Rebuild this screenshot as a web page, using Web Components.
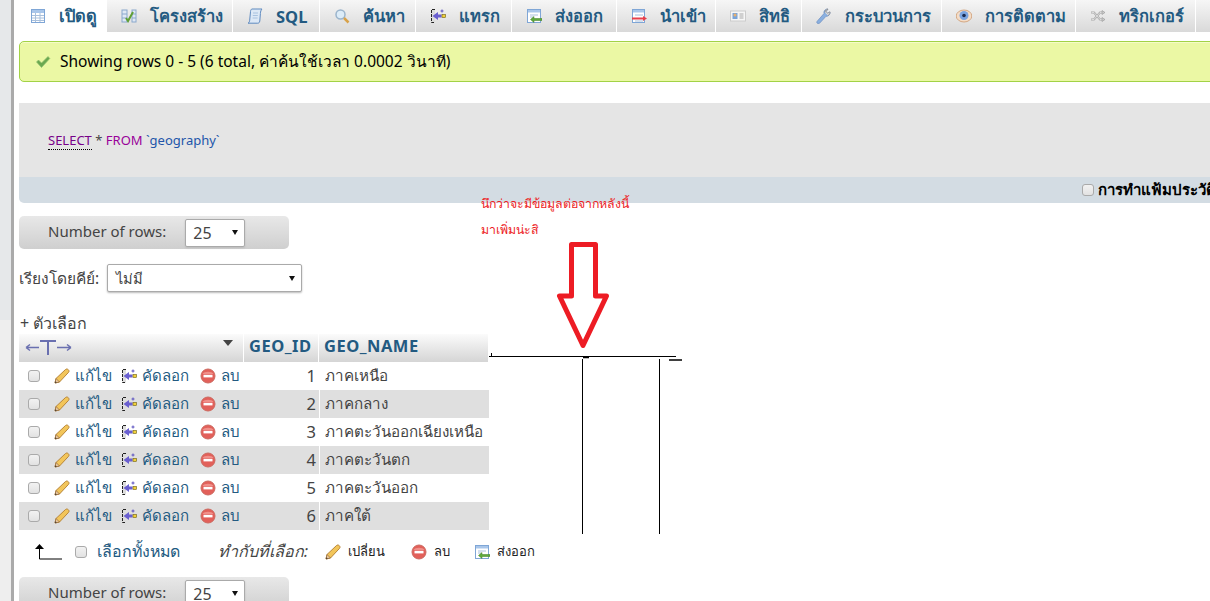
<!DOCTYPE html>
<html lang="th">
<head>
<meta charset="utf-8">
<title>geography</title>
<style>
  html, body { margin: 0; padding: 0; height: 601px; overflow: hidden; background: #fff; }
  body { font-family: "Noto Sans", "Open Sans", "DejaVu Sans", sans-serif; color: #444; }
</style>
</head>
<body>
<pma-page>
  <pma-tabs>
    <pma-tab icon="browse" label="เปิดดู" width="87" active></pma-tab>
    <pma-tab icon="structure" label="โครงสร้าง" width="125"></pma-tab>
    <pma-tab icon="sql" label="SQL" width="86"></pma-tab>
    <pma-tab icon="search" label="ค้นหา" width="95"></pma-tab>
    <pma-tab icon="insert" label="แทรก" width="95"></pma-tab>
    <pma-tab icon="export" label="ส่งออก" width="104"></pma-tab>
    <pma-tab icon="import" label="นำเข้า" width="98"></pma-tab>
    <pma-tab icon="card" label="สิทธิ" width="85"></pma-tab>
    <pma-tab icon="wrench" label="กระบวนการ" width="139"></pma-tab>
    <pma-tab icon="eye" label="การติดตาม" width="133"></pma-tab>
    <pma-tab icon="shuffle" label="ทริกเกอร์" width="119"></pma-tab>
    <pma-tab width="30"></pma-tab>
  </pma-tabs>
  <pma-message>Showing rows 0 - 5 (6 total, ค่าค้นใช้เวลา 0.0002 วินาที)</pma-message>
  <pma-sql-box></pma-sql-box>
  <pma-rows-nav></pma-rows-nav>
  <pma-key-select></pma-key-select>
  <pma-options></pma-options>
  <pma-results>
    <pma-row num="1" name="ภาคเหนือ"></pma-row>
    <pma-row num="2" name="ภาคกลาง" shade></pma-row>
    <pma-row num="3" name="ภาคตะวันออกเฉียงเหนือ"></pma-row>
    <pma-row num="4" name="ภาคตะวันตก" shade></pma-row>
    <pma-row num="5" name="ภาคตะวันออก"></pma-row>
    <pma-row num="6" name="ภาคใต้" shade></pma-row>
  </pma-results>
  <pma-bulk></pma-bulk>
  <pma-rows-nav></pma-rows-nav>
  <pma-annotation slot="over"></pma-annotation>
</pma-page>

<script>
const ICONS = {
  browse: `<rect x="1.5" y="1.5" width="13" height="13" fill="#fff" stroke="#7fa6d6"/><path d="M2 2h12v3H2z" fill="#a9c6ea"/><path d="M2 7.5h12M2 10h12M2 12.5h12M5.5 5v9M10 5v9" stroke="#a9c0dc"/>`,
  structure: `<rect x="1" y="2" width="5" height="12" fill="#dfe8f4" stroke="#8aa8cc"/><rect x="11" y="2" width="4" height="12" fill="#dfe8f4" stroke="#8aa8cc"/><path d="M1 6h5M1 10h5M11 6h4M11 10h4" stroke="#8aa8cc"/><path d="M5 10l2 3 5-9" fill="none" stroke="#5f9f35" stroke-width="2"/>`,
  sql: `<path d="M5 1h10c-1 1-1.500 2.500-1.600 4.500l-.6 7.500c-.2 1.500-1 2.200-2 2.200H1c1-.5 1.600-1.500 1.700-3L3.500 3.500C3.700 2 4 1.300 5 1z" fill="#dce8f6" stroke="#5f8abf"/><path d="M6 5h5M5.800 7.500h5M5.600 10h5" stroke="#a8c2e0"/>`,
  search: `<circle cx="6.500" cy="6.500" r="4.500" fill="#dcecf8" stroke="#9ab4cc" stroke-width="1.500"/><path d="M10 10l4.500 4.500" stroke="#d8a24a" stroke-width="2.500"/>`,
  insert: `<path d="M5 1.500H1.500v13H5" fill="#ddd" stroke="#222" stroke-dasharray="3 1"/><path d="M11.500 6.500H8V4L2.500 8 8 12V9.500h3.500z" fill="#6a5fd0"/><rect x="12" y="6.500" width="3.500" height="3" fill="#f2d23c" stroke="#6a5a10" stroke-width=".6"/><path d="M12 1.500v3M10.500 3h3" stroke="#5a50c0"/>`,
  export: `<rect x="1.500" y="1.500" width="13" height="13" fill="#fff" stroke="#7fa6d6"/><path d="M2 2h12v2.500H2z" fill="#a9c6ea"/><path d="M4 7h8M4 9h3" stroke="#a9c0dc"/><path d="M16 10.500H8V8.500L4.500 11.500 8 14.500v-2h8z" fill="#5faa3c" stroke="#3f7f25" stroke-width=".5"/>`,
  import: `<rect x="1.500" y="1.500" width="12" height="13" fill="#fff" stroke="#7fa6d6"/><path d="M2 2h11v2.500H2z" fill="#a9c6ea"/><path d="M4 7h8M4 13h8" stroke="#a9c0dc"/><path d="M1 9.500h11V8l4 2.500-4 2.500v-1.500H1z" fill="#e8404a"/>`,
  card: `<rect x=".5" y="3" width="15" height="10" fill="#f6f6f6" stroke="#ccc"/><rect x="2.500" y="5" width="5" height="6" fill="#7aa4d8"/><circle cx="5" cy="7" r="1.500" fill="#e8b070"/><path d="M9.500 6h4M9.500 8h4M9.500 10h4" stroke="#aaa"/>`,
  wrench: `<path d="M2 15.500c-1 0-1.500-1-1-2l7-8c-.5-2 .5-4 3-4.500l1 .2-2 2.300 1.500 2 2.500-1.500c.3 2.500-1.500 4.500-4 4.300l-6.500 7z" fill="#8ab0e0" stroke="#6a8cc0" stroke-width=".7"/><path d="M9 4.500c-.2-2 1-3.500 3-3.500l-2 2.300 1.500 2 2.500-1.500c.2 1.500-.6 3-2 3.800" fill="#ddd" stroke="#888" stroke-width=".7"/>`,
  eye: `<ellipse cx="8" cy="8" rx="7.800" ry="6" fill="#f4ddc8" stroke="#d4a884"/><circle cx="8" cy="7.500" r="4.500" fill="#7aa4e0"/><circle cx="8" cy="7.500" r="1.800" fill="#1a2a50"/>`,
  shuffle: `<path d="M1 4.500h3l6 7h2M1 11.500h3l6-7h2" fill="none" stroke="#aaa" stroke-width="2"/><path d="M1.500 4.500h2.500l6 7h2M1.500 11.500h2.500l6-7h2" fill="none" stroke="#eee" stroke-width=".7"/><path d="M12 2.500l3 2-3 2zM12 9.500l3 2-3 2z" fill="#ccc" stroke="#888" stroke-width=".5"/>`,
  pencil: `<path d="M1 15l1-4.500L11.500 1.500c1-.8 2-.6 2.800.2s1 1.800.2 2.700L5.500 14z" fill="#f2c55a" stroke="#b8863a"/><path d="M1 15l1-4.500 3.500 3.500z" fill="#e8c8a0" stroke="#8a5a2a" stroke-width=".6"/><path d="M1 15l.4-1.800 1.400 1.400z" fill="#333"/>`,
  del: `<circle cx="8" cy="8" r="7" fill="#e2605a" stroke="#cc6a60"/><path d="M2.500 6c1.500-3 9.500-3 11 0" fill="#f0908a"/><rect x="3.500" y="6.800" width="9" height="2.600" fill="#fff"/>`,
  check: `<path d="M1.500 8l2-2 3 3L13 2.500l1.800 2L6.500 13.500z" fill="#6aa84f" stroke="#8fc070" stroke-width=".7"/>`
};

class PmaIcon extends HTMLElement {
  constructor() {
    super()
    this.attachShadow({ mode: "open" })
  }
  connectedCallback() {
    const size = this.getAttribute("size") || 16
    this.shadowRoot.innerHTML = `
      <style>
        :host { display: inline-flex; flex: none; width: ${size}px; height: ${size}px; }
        svg { width: 100%; height: 100%; display: block; }
      </style>
      <svg viewBox="0 0 16 16">${ICONS[this.getAttribute("name")] || ""}</svg>`
  }
}
customElements.define("pma-icon", PmaIcon)

class PmaCheck extends HTMLElement {
  constructor() {
    super()
    this.attachShadow({ mode: "open" }).innerHTML = `
      <style>
        :host {
          display: inline-block; flex: none; box-sizing: border-box;
          width: 12px; height: 12px; border: 1px solid #aaa; border-radius: 3px;
          background: linear-gradient(#f2f2f2, #e2e2e2);
        }
      </style>`
  }
}
customElements.define("pma-check", PmaCheck)

class PmaSelect extends HTMLElement {
  constructor() {
    super()
    this.attachShadow({ mode: "open" }).innerHTML = `
      <style>
        :host {
          display: flex; align-items: center; justify-content: space-between; box-sizing: border-box;
          height: 28px; padding: 0 6px 0 7px; background: #fff; color: #444;
          border: 1px solid #aaa; border-radius: 2px; box-shadow: 0 1px 2px #bbb; font-size: 16px;
        }
        i { width: 0; height: 0; border: 3px solid transparent; border-top: 5px solid #111; border-bottom: 0; }
      </style>
      <slot></slot><i></i>`
  }
}
customElements.define("pma-select", PmaSelect)

class PmaPage extends HTMLElement {
  constructor() {
    super()
    this.attachShadow({ mode: "open" }).innerHTML = `
      <style>
        :host { display: flex; position: relative; width: 1210px; height: 601px; overflow: hidden; }
        .side { flex: none; width: 11px; background: linear-gradient(#e6e8ea 320px, #eeeeee 320px); border-right: 3px solid #aaa; }
        main { flex: 1; min-width: 0; padding-left: 5px; overflow: hidden; }
      </style>
      <div class="side"></div>
      <main><slot></slot></main>
      <slot name="over"></slot>`
  }
}
customElements.define("pma-page", PmaPage)

class PmaTabs extends HTMLElement {
  constructor() {
    super()
    this.attachShadow({ mode: "open" }).innerHTML = `
      <style>
        :host { display: flex; height: 32px; gap: 1px; width: 1230px; }
      </style>
      <slot></slot>`
  }
}
customElements.define("pma-tabs", PmaTabs)

class PmaTab extends HTMLElement {
  constructor() {
    super()
    this.attachShadow({ mode: "open" })
  }
  connectedCallback() {
    const icon = this.getAttribute("icon")
    const label = this.getAttribute("label") || ""
    this.shadowRoot.innerHTML = `
      <style>
        :host {
          display: flex; flex: none; align-items: center; box-sizing: border-box;
          width: ${this.getAttribute("width")}px; height: 32px; padding-left: 14px;
          background: linear-gradient(#f6f6f6, #d9d9d9);
          color: #235a81; font-weight: bold; font-size: 16.5px; white-space: nowrap;
        }
        :host([active]) { background: #fff; padding-left: 11px; }
        span { margin-left: 13px; }
      </style>
      ${icon ? `<pma-icon name="${icon}"></pma-icon><span>${label}</span>` : ""}`
  }
}
customElements.define("pma-tab", PmaTab)

class PmaMessage extends HTMLElement {
  constructor() {
    super()
    this.attachShadow({ mode: "open" }).innerHTML = `
      <style>
        :host {
          display: flex; align-items: center; gap: 9px; box-sizing: border-box;
          height: 41px; margin-top: 9px; width: 1240px; padding-left: 15px;
          background: #ebf8a4; border: 1px solid #a2d246; border-radius: 5px;
          color: #000; font-size: 15.5px; white-space: nowrap;
          box-shadow: inset 0 1px 0 #f5fcc8;
        }
      </style>
      <pma-icon name="check"></pma-icon><slot></slot>`
  }
}
customElements.define("pma-message", PmaMessage)

class PmaSqlBox extends HTMLElement {
  constructor() {
    super()
    this.attachShadow({ mode: "open" }).innerHTML = `
      <style>
        :host { display: block; width: calc(100% + 6px); margin-top: 21px; font-size: 13px; }
        .code { display: flex; align-items: center; height: 74px; padding-left: 29px; background: #e5e5e5; color: #444; white-space: pre; }
        .kw { color: #909; }
        .fn { color: #708; border-bottom: 1px dotted #000; }
        .str { color: #2255aa; }
        .tools {
          display: flex; justify-content: flex-end; align-items: center; gap: 4px;
          height: 26px; background: #d3dce3; border-bottom-left-radius: 5px;
          color: #000; font-weight: bold; font-size: 15px; white-space: nowrap;
        }
      </style>
      <div class="code"><div><span class="fn">SELECT</span> * <span class="kw">FROM</span> <span class="str">\`geography\`</span></div></div>
      <div class="tools"><pma-check></pma-check><span>การทำแฟ้มประวัติ</span></div>`
  }
}
customElements.define("pma-sql-box", PmaSqlBox)

class PmaRowsNav extends HTMLElement {
  constructor() {
    super()
    this.attachShadow({ mode: "open" }).innerHTML = `
      <style>
        :host {
          display: flex; align-items: center; box-sizing: border-box; height: 33px; width: 270px;
          margin-top: 13px; padding-left: 29px; border-radius: 5px;
          background: linear-gradient(#e8e8e8, #cfcfcf); color: #444; font-size: 15px;
        }
        span { margin-top: -4px; }
        pma-select { width: 60px; margin-left: 19px; }
      </style>
      <span>Number of rows:</span><pma-select>25</pma-select>`
  }
}
customElements.define("pma-rows-nav", PmaRowsNav)

class PmaKeySelect extends HTMLElement {
  constructor() {
    super()
    this.attachShadow({ mode: "open" }).innerHTML = `
      <style>
        :host { display: flex; align-items: center; gap: 8px; height: 28px; margin-top: 15px; color: #444; font-size: 15.5px; }
        pma-select { width: 195px; padding-left: 8px; font-size: 14.5px; }
      </style>
      <span>เรียงโดยคีย์:</span><pma-select>ไม่มี</pma-select>`
  }
}
customElements.define("pma-key-select", PmaKeySelect)

class PmaOptions extends HTMLElement {
  constructor() {
    super()
    this.attachShadow({ mode: "open" }).innerHTML = `
      <style>
        :host { display: flex; align-items: center; height: 20px; margin: 21px 0 1px 1px; color: #444; font-size: 16px; }
      </style>
      + ตัวเลือก`
  }
}
customElements.define("pma-options", PmaOptions)

class PmaResults extends HTMLElement {
  constructor() {
    super()
    this.attachShadow({ mode: "open" }).innerHTML = `
      <style>
        :host { display: block; width: 470px; }
        .head { display: grid; grid-template-columns: 225px 75px 170px; height: 27px; margin-bottom: 1px; }
        .head div {
          display: flex; align-items: center; box-sizing: border-box; padding: 0 0 5px 5px;
          background: linear-gradient(#fbfbfb, #d5d5d5); color: #235a81; font-weight: bold; font-size: 16.5px; letter-spacing: .5px;
          border-right: 1px solid #fff;
        }
        .first { position: relative; }
        .first svg { display: block; position: absolute; left: 5px; top: 5px; }
        .sort { position: absolute; right: 10px; top: 6px; width: 0; height: 0; border: 5.5px solid transparent; border-top: 6px solid #444; border-bottom: 0; }
      </style>
      <div class="head">
        <div class="first">
          <svg width="50" height="18" viewBox="0 0 50 18">
            <path d="M2 8.500h13M2 8.500l4-3M2 8.500l4 3M33 8.500h14M47 8.500l-4-3M47 8.500l-4 3" fill="none" stroke="#6a70b0" stroke-width="1.500"/>
            <path d="M16 2h16M24 2v14" fill="none" stroke="#6a70b0" stroke-width="2"/>
          </svg>
          <span class="sort"></span>
        </div>
        <div>GEO_ID</div>
        <div>GEO_NAME</div>
      </div>
      <slot></slot>`
  }
}
customElements.define("pma-results", PmaResults)

class PmaRow extends HTMLElement {
  constructor() {
    super()
    this.attachShadow({ mode: "open" })
  }
  connectedCallback() {
    this.shadowRoot.innerHTML = `
      <style>
        :host { display: grid; grid-template-columns: 225px 75px 170px; height: 28px; align-items: center; color: #444; font-size: 15px; white-space: nowrap; }
        :host([shade]) { background: #dfdfdf; }
        .acts { display: flex; align-items: center; height: 100%; padding-left: 9px; }
        .acts span { color: #235a81; }
        pma-icon { margin-right: 5px; }
        .num { text-align: right; padding: 0 3px 2px 0; font-size: 16.5px; }
        .name { padding-left: 5px; border-left: 1px solid #fff; height: 100%; display: flex; align-items: center; font-size: 15.2px; }
        .w1 { width: 46px; } .w2 { width: 58px; }
      </style>
      <div class="acts">
        <pma-check style="margin-right:14px"></pma-check>
        <pma-icon name="pencil"></pma-icon><span class="w1">แก้ไข</span>
        <pma-icon name="insert"></pma-icon><span class="w2">คัดลอก</span>
        <pma-icon name="del"></pma-icon><span>ลบ</span>
      </div>
      <div class="num">${this.getAttribute("num")}</div>
      <div class="name">${this.getAttribute("name")}</div>`
  }
}
customElements.define("pma-row", PmaRow)

class PmaBulk extends HTMLElement {
  constructor() {
    super()
    this.attachShadow({ mode: "open" }).innerHTML = `
      <style>
        :host { display: flex; align-items: center; box-sizing: border-box; height: 34px; padding: 9px 0 0 15px; color: #444; font-size: 16px; white-space: nowrap; }
        svg { flex: none; }
        .all { color: #235a81; margin: 0 38px 0 10px; font-size: 15.9px; }
        em { margin-right: 17px; }
        small { font-size: 13px; color: #222; }
        pma-icon { margin-right: 7px; }
        .gap { margin-right: 26px; }
        .gap2 { margin-right: 24px; }
      </style>
      <svg width="28" height="16" viewBox="0 0 28 16"><path d="M5.500 3v12H28" fill="none" stroke="#000"/><path d="M1 5l4.500-5L10 5z" fill="#000"/></svg>
      <pma-check style="margin:0 0 0 13px"></pma-check>
      <span class="all">เลือกทั้งหมด</span>
      <em>ทำกับที่เลือก:</em>
      <pma-icon name="pencil"></pma-icon><small class="gap">เปลี่ยน</small>
      <pma-icon name="del"></pma-icon><small class="gap2">ลบ</small>
      <pma-icon name="export"></pma-icon><small>ส่งออก</small>`
  }
}
customElements.define("pma-bulk", PmaBulk)

// hand drawn marks on top of the screenshot
class PmaAnnotation extends HTMLElement {
  constructor() {
    super()
    this.attachShadow({ mode: "open" }).innerHTML = `
      <style>
        :host { position: absolute; left: 0; top: 0; width: 1210px; height: 601px; pointer-events: none; }
        svg { position: absolute; left: 0; top: 0; }
        p { position: absolute; left: 481px; margin: 0; color: #ed1c24; font-size: 12.3px; line-height: 16px; white-space: nowrap; }
      </style>
      <p style="top:196px">นึกว่าจะมีข้อมูลต่อจากหลังนี้</p>
      <p style="top:222px">มาเพิ่มน่ะสิ</p>
      <svg width="1210" height="601" viewBox="0 0 1210 601">
        <path d="M571.500 244.500h24V296H606.500L583 345.500 559.500 296H571.500z" fill="none" stroke="#ed1c24" stroke-width="5" stroke-linejoin="round"/>
        <path d="M489 356.500h187M491.500 353v3M582.500 359v175M659.500 359v175" fill="none" stroke="#000"/>
        <path d="M583 357.500h6M669 360h13" fill="none" stroke="#000" stroke-width="1.500"/>
      </svg>`
  }
}
customElements.define("pma-annotation", PmaAnnotation)
</script>
</body>
</html>
